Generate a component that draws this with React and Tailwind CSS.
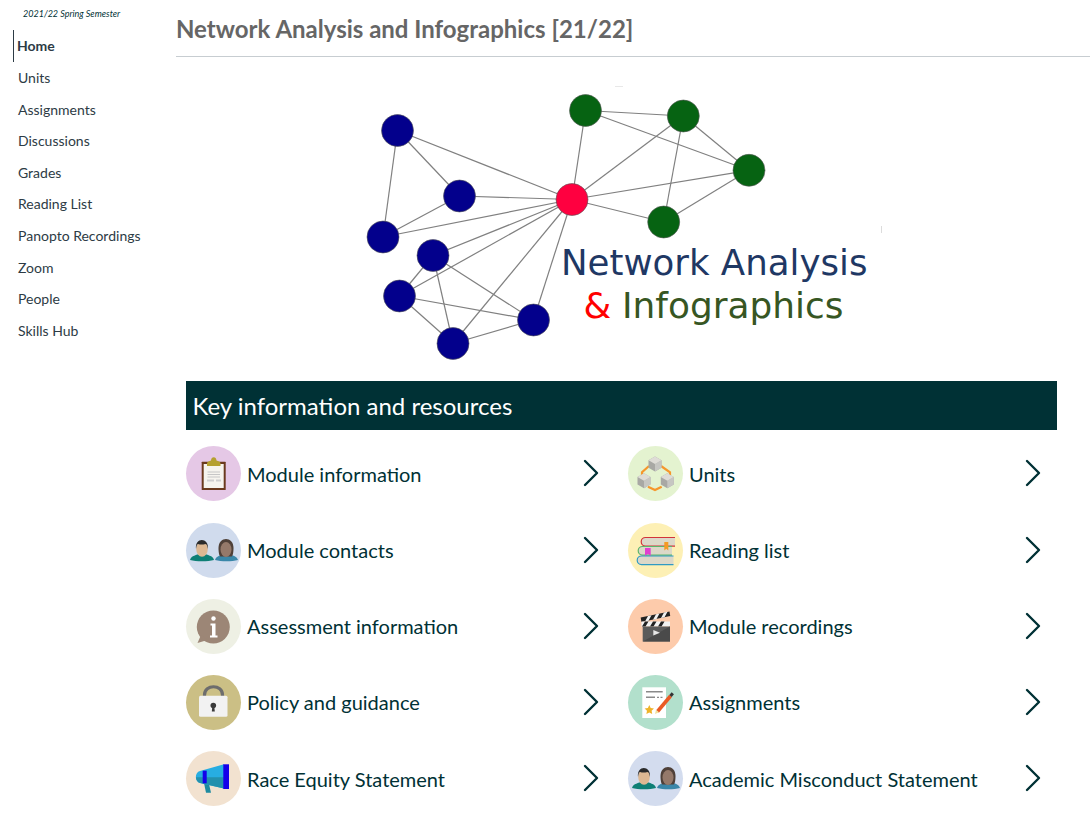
import React from 'react';
import { ChevronRight } from 'lucide-react';

const navItems = ['Home', 'Units', 'Assignments', 'Discussions', 'Grades', 'Reading List', 'Panopto Recordings', 'Zoom', 'People', 'Skills Hub'];

const nodes = {
  a: [397.5, 130.5], b: [459.5, 196], c: [383, 237], d: [433, 255.5], e: [399.5, 296], f: [453, 343.5], g: [533.5, 320],
  r: [572, 199.5], g1: [585.5, 110.5], g2: [683.3, 116], g3: [749, 170.3], g4: [663.7, 222],
};
const edges = ['a-r', 'a-b', 'a-c', 'b-r', 'b-c', 'c-r', 'd-r', 'd-e', 'd-f', 'd-g', 'e-r', 'e-f', 'e-g', 'f-r', 'f-g', 'g-r', 'r-g1', 'r-g2', 'r-g3', 'r-g4', 'g1-g2', 'g1-g3', 'g2-g3', 'g2-g4', 'g3-g4'];

const nodeColor = (key) => {
  if (key === 'r') return '#ff0040';
  return key.length === 2 ? '#066312' : '#03008c';
};

const Logo = () => (
  <svg width="914" height="324" viewBox="176 57 914 324" className="block">
    {edges.map((edge) => {
      const [from, to] = edge.split('-');
      return <line key={edge} x1={nodes[from][0]} y1={nodes[from][1]} x2={nodes[to][0]} y2={nodes[to][1]} stroke="#808080" strokeWidth="1.2" />;
    })}
    {Object.entries(nodes).map(([key, [cx, cy]]) => (
      <circle key={key} cx={cx} cy={cy} r="16" stroke="#555" strokeWidth="0.6" fill={nodeColor(key)} />
    ))}
    <line x1="615" y1="86.500" x2="623" y2="86.500" stroke="#e8e8e8" />
    <line x1="881.500" y1="226" x2="881.500" y2="233" stroke="#dcdcdc" />
    <text x="561" y="275" fontFamily="'DejaVu Sans', sans-serif" fontSize="35.600" fill="#1f3864">Network Analysis</text>
    <text x="583.500" y="318" fontFamily="'DejaVu Sans', sans-serif" fontSize="35.600" fill="#ff0000">&amp;</text>
    <text x="622" y="318" fontFamily="'DejaVu Sans', sans-serif" fontSize="35.900" fill="#375623">Infographics</text>
  </svg>
);

const ClipboardIcon = () => (
  <svg viewBox="0 0 55 55" className="w-full h-full">
    <rect x="15.700" y="15.700" width="24" height="28.300" rx="0.500" fill="#6b3a1e" />
    <rect x="17.700" y="18" width="20" height="24" fill="#f6f4ee" />
    <path d="M21 20v-2.500c0-2 2.500-2.500 4-3 0-4.500 5.500-4.500 5.500 0 1.500.5 4 1 4 3V20z" fill="#b5a02f" />
    <path d="M21.500 26h12.500M21.500 28.500h12.500M21.500 31h12.500" stroke="#c6c6c6" strokeWidth="1.200" />
    <path d="M21 34.500h7M30 34.500h5" stroke="#cfcfcf" strokeWidth="1.800" />
  </svg>
);

const PeopleIcon = () => (
  <svg viewBox="0 0 55 55" className="w-full h-full">
    <path d="M4 37c1-4.500 7-5 10-6.500h4c3 1.500 9 2 10 6.500-6 1.800-18 1.800-24 0z" fill="#0e7f75" />
    <ellipse cx="16" cy="26" rx="5.800" ry="7.800" fill="#ddb892" />
    <path d="M10 26c-1.500-12 13-12 12 0-.8-3-1-4.500-2.500-5-3 .8-5 .8-7.500 0-1.200.5-1.500 2-2 5z" fill="#2b2b2b" />
    <path d="M29 37c1-4 6-4.500 9-6h5c3 1.500 8 2 9 6-6 1.800-17 1.800-23 0z" fill="#3a87a9" />
    <path d="M32.500 25c0-12 15-12 15 0 0 5-.8 8-2 8.500h-11c-1.200-.5-2-3.500-2-8.500z" fill="#4f4038" />
    <ellipse cx="40" cy="26.500" rx="5.500" ry="7.400" fill="#95796a" />
  </svg>
);

const InfoIcon = () => (
  <svg viewBox="0 0 55 55" className="w-full h-full">
    <circle cx="27.300" cy="28" r="16.500" fill="#9c8676" />
    <path d="M15 36l-3.500 8 10-3z" fill="#9c8676" />
    <circle cx="27.500" cy="19.500" r="2.200" fill="#fff" />
    <path d="M24.500 24.500h5v12h2v2h-7.500v-2h2v-10h-1.500z" fill="#fff" />
  </svg>
);

const LockIcon = () => (
  <svg viewBox="0 0 55 55" className="w-full h-full">
    <path d="M18.500 22v-2c0-11 18-11 18 0v2" fill="none" stroke="#6d6d6d" strokeWidth="3.200" />
    <rect x="13" y="20.700" width="28.500" height="21" rx="1.500" fill="#f2f2f2" />
    <circle cx="27.300" cy="30.500" r="2.800" fill="#3a3a3a" />
    <path d="M26.300 31.500h2l.5 5h-3z" fill="#3a3a3a" />
  </svg>
);

const MegaphoneIcon = () => (
  <svg viewBox="0 0 55 55" className="w-full h-full">
    <path d="M18 32l5 1 2 8.700h-5z" fill="#1d8aa0" />
    <path d="M14 20l24-6.700V37.500L14 32c-5.500-1-5.500-11 0-12z" fill="#27ade2" />
    <path d="M10 26.300h28V37.500L14 32c-2.500-.5-4-3.200-4-5.700z" fill="#2390ad" />
    <rect x="16.700" y="19.700" width="4" height="12.600" fill="#1400ea" />
    <rect x="37.300" y="13.300" width="5.700" height="24.700" fill="#1400ea" />
  </svg>
);

const Cube = ({ x, y }) => (
  <g transform={`translate(${x} ${y})`}>
    <path d="M0-7.500l6.500 3.700v7.600L0 7.500-6.500 3.800v-7.600z" fill="#a8a8a4" />
    <path d="M0 0l6.500-3.800v7.600L0 7.500z" fill="#c6c6c2" />
    <path d="M0-7.500l6.500 3.700L0 0l-6.500-3.800z" fill="#dedcd6" />
  </g>
);

const UnitsIcon = () => (
  <svg viewBox="0 0 55 55" className="w-full h-full">
    <path d="M21 20l-7 6.300v3M20 40.700l7 3.300 6.700-3.300M33 20l9 6.300v3" fill="none" stroke="#f6972c" strokeWidth="2.200" />
    <Cube x={27} y={18} />
    <Cube x={16} y={34.700} />
    <Cube x={39.300} y={34.700} />
  </svg>
);

const Book = ({ x, y, end, color }) => (
  <path d={`M${end} ${y}H${x + 4.500}a4.300 4.300 0 0 0 0 8.600H${end}`} fill="#dcd8c8" stroke={color} strokeWidth="1.200" />
);

const BooksIcon = () => (
  <svg viewBox="0 0 55 55" className="w-full h-full">
    <Book x={13} y={14.500} end={47} color="#d2343a" />
    <Book x={10} y={23.500} end={44} color="#5cb56b" />
    <Book x={9} y={33} end={45.500} color="#2f9ac4" />
    <path d="M36.300 19h4v8.500l-2-1.800-2 1.800z" fill="#f59a23" />
    <path d="M17 25h5.700v7.700l-2.800-1.700-2.900 1.700z" fill="#e040d0" />
  </svg>
);

const ClapperIcon = () => (
  <svg viewBox="0 0 55 55" className="w-full h-full">
    <path d="M12.700 18.500L41.500 12.500l.7 4.500-28.800 6z" fill="#222" />
    <path d="M17 22.500l3-5.500 3.500-.7-3 5.500zM25 20.800l3-5.500 3.500-.7-3 5.500zM33 19l3-5.500 3.500-.7-3 5.500z" fill="#f2f2f2" />
    <rect x="13.500" y="22.500" width="28.500" height="5" fill="#f2f2f2" />
    <path d="M17 22.500h3.500l-3 5H14zM25 22.500h3.500l-3 5H22zM33 22.500h3.500l-3 5H30z" fill="#222" />
    <rect x="14.700" y="27.500" width="27.300" height="15" fill="#5b5b5b" />
    <path d="M14.700 42.500l27.300-15v15z" fill="#4a4a4a" />
    <path d="M25.300 31l6.700 2.700-6.700 2.700z" fill="#e6e6e6" />
  </svg>
);

const ChecklistIcon = () => (
  <svg viewBox="0 0 55 55" className="w-full h-full">
    <rect x="14.300" y="12.300" width="23.700" height="30.700" fill="#fff" />
    <path d="M18 16.700h16.700M18 22.300h9" stroke="#8a8a8a" strokeWidth="1.500" />
    <path d="M29 22.300h2M32.500 22.300h2" stroke="#8a8a8a" strokeWidth="1.300" />
    <path d="M21.300 30l1.400 3 3.300.4-2.400 2.300.6 3.300-2.900-1.600-2.900 1.600.6-3.300-2.400-2.300 3.300-.4z" fill="#efb32a" />
    <path d="M29.500 36.500l13-15.500" stroke="#ea5a24" strokeWidth="3.600" />
    <path d="M42.500 21l2.300-2.700" stroke="#333" strokeWidth="3" />
    <path d="M28 34.800l3 2.500-4 1.700z" fill="#f0df9a" />
  </svg>
);

const links = [
  [
    { label: 'Module information', bg: 'bg-[#e5c8e6]', Icon: ClipboardIcon },
    { label: 'Module contacts', bg: 'bg-[#d0dbed]', Icon: PeopleIcon },
    { label: 'Assessment information', bg: 'bg-[#eef0e4]', Icon: InfoIcon },
    { label: 'Policy and guidance', bg: 'bg-[#cbbf85]', Icon: LockIcon },
    { label: 'Race Equity Statement', bg: 'bg-[#f2e2d0]', Icon: MegaphoneIcon },
  ],
  [
    { label: 'Units', bg: 'bg-[#e4f3d0]', Icon: UnitsIcon },
    { label: 'Reading list', bg: 'bg-[#fdf0b5]', Icon: BooksIcon },
    { label: 'Module recordings', bg: 'bg-[#fdcbab]', Icon: ClapperIcon },
    { label: 'Assignments', bg: 'bg-[#b2e0cc]', Icon: ChecklistIcon },
    { label: 'Academic Misconduct Statement', bg: 'bg-[#d3dcee]', Icon: PeopleIcon },
  ],
];

const LinkRow = ({ label, bg, Icon }) => (
  <div className="flex items-center h-[55px]">
    <div className={`${bg} w-[55px] h-[55px] rounded-full shrink-0`}>
      <Icon />
    </div>
    <span className="ml-[6px] text-[20px] text-[#003135] whitespace-nowrap flex-1">{label}</span>
    <ChevronRight className="w-12 h-12 -mt-[1px] text-[#003135] shrink-0" strokeWidth={1.2} />
  </div>
);

const App = () => (
  <div className="flex w-[1090px] h-[822px] overflow-hidden bg-white font-['Lato',sans-serif]">
    {/* Sidebar */}
    <div className="w-[176px] shrink-0 pl-[13px]">
      <p className="pt-[7px] pl-[10px] h-[30.17px] text-[9px] italic text-[#003135]">2021/22 Spring Semester</p>
      <ul>
        {navItems.map((item) => (
          <li
            key={item}
            className={item === 'Home'
              ? 'h-[31.6px] flex items-center pl-[3px] border-l border-[#2d3b45] font-bold text-[14px] text-[#2d3b45]'
              : 'h-[31.6px] flex items-center pl-[5px] text-[14px] text-[#2d3b45]'}
          >
            {item}
          </li>
        ))}
      </ul>
    </div>

    {/* Main */}
    <div className="flex-1 min-w-0">
      <div className="h-[57px] border-b border-[#c7cdd1] pt-[12px]">
        <h1 className="text-[24px] leading-[33px] font-bold text-[#666666]">Network Analysis and Infographics [21/22]</h1>
      </div>
      <Logo />
      <div className="ml-[10px] w-[871px]">
        <div className="h-[49px] bg-[#003135] text-white text-[24px] flex items-center pl-[6.5px]">Key information and resources</div>
        <div className="grid grid-cols-[442px_429px] pt-[16.35px]">
          {links.map((column, index) => (
            <div key={index} className={index === 0 ? 'flex flex-col gap-[21.2px] pr-[13.5px]' : 'flex flex-col gap-[21.2px]'}>
              {column.map((link) => <LinkRow key={link.label} {...link} />)}
            </div>
          ))}
        </div>
      </div>
    </div>
  </div>
);

export default App;
